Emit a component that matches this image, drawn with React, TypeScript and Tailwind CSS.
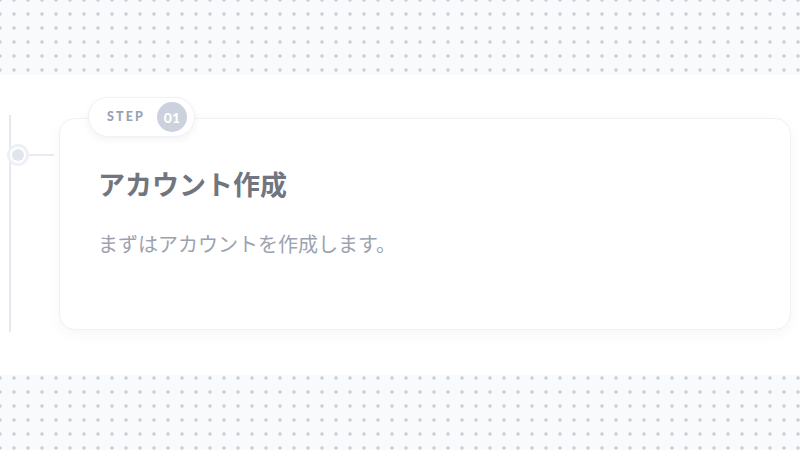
const dotted =
  'bg-[#f8fafc] bg-[radial-gradient(circle,#c9d1dc_1.5px,transparent_1.8px)] bg-[length:14px_14px] bg-[position:-7px_-7px]';

function StepBadge({ num }: { num: string }) {
  return (
    <div className="absolute left-[28px] top-[-22px] flex h-[40px] items-center gap-[12px] rounded-full border border-[#eef1f5] bg-white pl-[18px] pr-[7px] shadow-[0_3px_8px_rgba(15,23,42,0.05)]">
      <span className="text-[12.5px] font-black tracking-[0.17em] text-[#98a2b3]">STEP</span>
      <span className="flex h-[30px] w-[30px] items-center justify-center rounded-full bg-[#cbd2dd] text-[14px] font-black text-white">
        {num}
      </span>
    </div>
  );
}

function TimelineNode() {
  return (
    <>
      <div className="absolute left-0 top-0 bottom-0 w-[2px] bg-[#e3e8f1]" />
      <div className="absolute left-[19px] top-[39px] h-[2px] w-[26px] bg-[#e8ecf2]" />
      <div className="absolute left-[-2px] top-[29px] flex h-[22px] w-[22px] items-center justify-center rounded-full border-[3px] border-[#edf0f5] bg-white">
        <div className="h-[12px] w-[12px] rounded-full bg-[#e1e6ee]" />
      </div>
    </>
  );
}

export default function App() {
  return (
    <div
      className={`flex h-[450px] w-full flex-col overflow-hidden ${dotted}`}
      style={{ fontFamily: 'Lato, "Noto Sans CJK JP", sans-serif' }}
    >
      <div className="h-[75px] shrink-0" />
      <section className="h-[300px] shrink-0 bg-white pl-[9px] pr-[9px] pt-[40px]">
        <div className="flex h-[217px]">
          <div className="relative w-[50px] shrink-0">
            <TimelineNode />
          </div>
          <div className="relative mt-[3px] mb-[2px] flex-1 rounded-[16px] border border-[#eef1f5] bg-white px-[38px] shadow-[0_4px_14px_rgba(15,23,42,0.04)]">
            <StepBadge num="01" />
            <h2 className="mt-[48px] text-[27px] font-bold leading-[36px] text-[#70757f]">アカウント作成</h2>
            <p className="mt-[27px] text-[20px] leading-[28px] text-[#9ca3af]">まずはアカウントを作成します。</p>
          </div>
        </div>
      </section>
      <div className="flex-1" />
    </div>
  );
}
